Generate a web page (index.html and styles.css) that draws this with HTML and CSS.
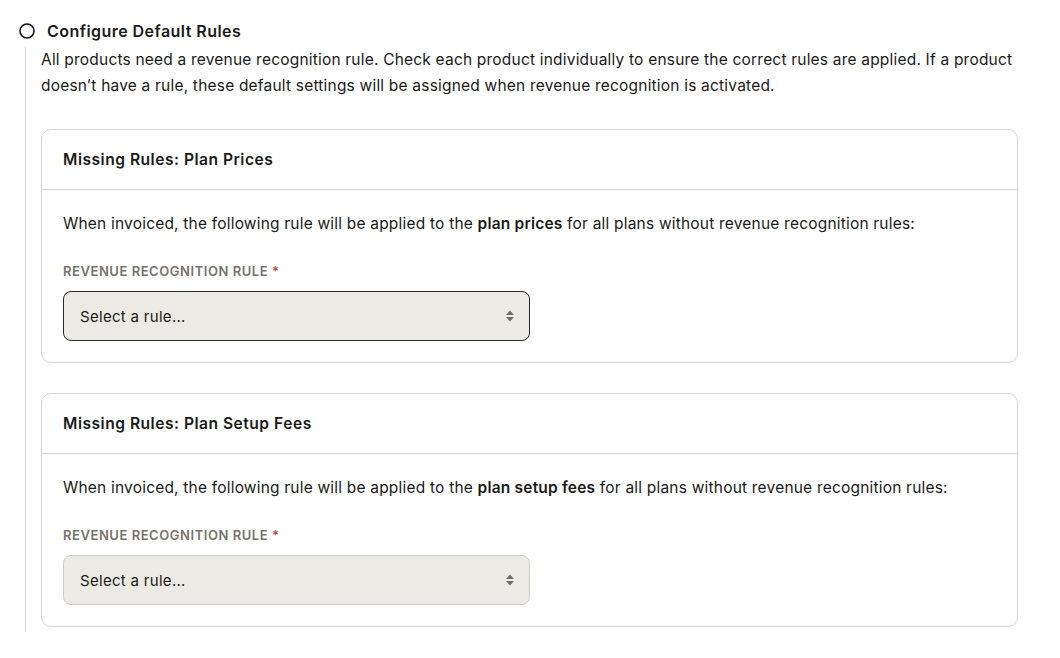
FILE: index.html
```html
<!DOCTYPE html>
<html lang="en">
<head>
  <meta charset="UTF-8" />
  <meta name="viewport" content="width=device-width, initial-scale=1.0"/>
  <title>Configure Default Rules</title>
  <link rel="stylesheet" href="styles.css">
</head>
<body>
  <div class="step">
    <div class="step-head">
      <svg class="step-dot" width="16" height="16" viewBox="0 0 16 16"><circle cx="8" cy="8" r="7" fill="none" stroke="#111" stroke-width="1.6"/></svg>
      <h2>Configure Default Rules</h2>
    </div>

    <div class="step-body">
      <p class="intro">All products need a revenue recognition rule. Check each product individually to ensure the correct rules are applied. If a product doesn’t have a rule, these default settings will be assigned when revenue recognition is activated.</p>

      <div class="card">
        <div class="card-head">Missing Rules: Plan Prices</div>
        <div class="card-body">
          <p>When invoiced, the following rule will be applied to the <b>plan prices</b> for all plans without revenue recognition rules:</p>
          <label class="field-label">Revenue Recognition Rule <span class="req">*</span></label>
          <div class="select focused">
            <span>Select a rule...</span>
            <svg width="10" height="14" viewBox="0 0 10 14"><path d="M5 1.5 L9 6 H1 Z M5 12.5 L9 8 H1 Z" fill="#6e6e6a"/></svg>
          </div>
        </div>
      </div>

      <div class="card">
        <div class="card-head">Missing Rules: Plan Setup Fees</div>
        <div class="card-body">
          <p>When invoiced, the following rule will be applied to the <b>plan setup fees</b> for all plans without revenue recognition rules:</p>
          <label class="field-label">Revenue Recognition Rule <span class="req">*</span></label>
          <div class="select">
            <span>Select a rule...</span>
            <svg width="10" height="14" viewBox="0 0 10 14"><path d="M5 1.5 L9 6 H1 Z M5 12.5 L9 8 H1 Z" fill="#6e6e6a"/></svg>
          </div>
        </div>
      </div>
    </div>
  </div>
</body>
</html>
```

FILE: styles.css
```css
body {
  font-family: Inter, "Noto Sans", sans-serif;
  color: #1a1a18;
  background: #fff;
  margin: 0;
  padding: 0;
}
.step {
  padding: 23px 42px 0 19px;
}
.step-head {
  display: flex;
  align-items: center;
  gap: 12px;
}
.step-head h2 {
  margin: 0;
  font-size: 16px;
  font-weight: 600;
  line-height: 16px;
  letter-spacing: 0.45px;
}
.step-body {
  margin: 8px 0 0 6px;
  border-left: 1.5px solid #d8d6d0;
  padding: 0 0 5px 15px;
}
.intro {
  margin: 0 0 30px;
  font-size: 15.5px;
  line-height: 26px;
  letter-spacing: 0.2px;
}
.card {
  border: 1px solid #d8d6ce;
  border-radius: 10px;
  margin-bottom: 30px;
}
.card:last-child {
  margin-bottom: 0;
}
.card-head {
  padding: 0 21px;
  height: 59px;
  line-height: 59px;
  font-size: 15.6px;
  font-weight: 600;
  letter-spacing: 0.5px;
  border-bottom: 1px solid #d8d6ce;
}
.card-body {
  padding: 22px 21px 21px;
}
.card-body p {
  margin: 0 0 27px;
  font-size: 15.5px;
  line-height: 24px;
  letter-spacing: 0.2px;
}
.card-body b {
  font-weight: 600;
}
.field-label {
  display: block;
  font-size: 13px;
  font-weight: 600;
  line-height: 16px;
  letter-spacing: 0.55px;
  text-transform: uppercase;
  color: #77736b;
  margin-bottom: 12px;
}
.req {
  color: #c9472e;
}
.select {
  display: flex;
  align-items: center;
  justify-content: space-between;
  width: 467px;
  height: 50px;
  box-sizing: border-box;
  padding: 0 14px 0 16px;
  background: #ebeae4;
  border: 1px solid #cfcdc5;
  border-radius: 8px;
  font-size: 15px;
  letter-spacing: 0.3px;
}
.select.focused {
  border-color: #2a2a28;
}
```
